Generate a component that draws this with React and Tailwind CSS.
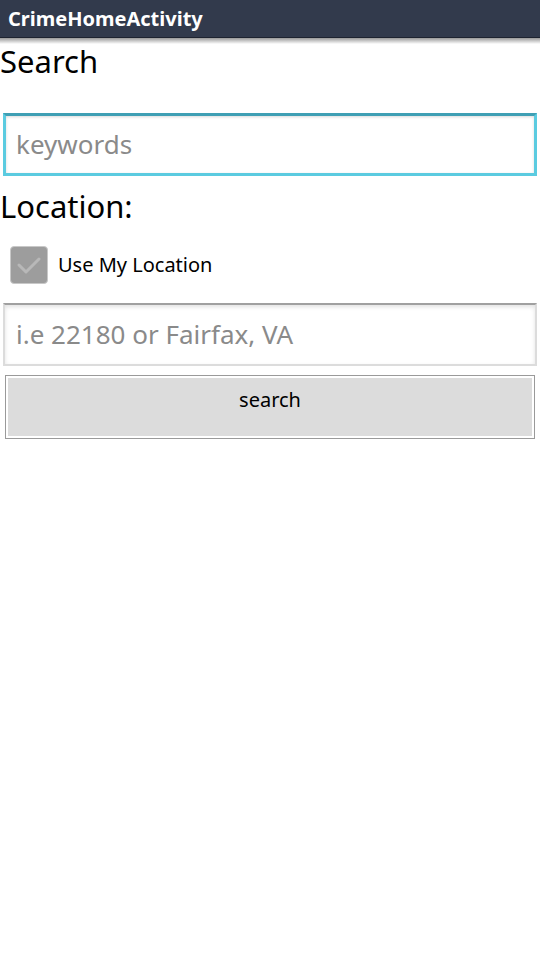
export default function App() {
  return (
    <div className="w-[540px] h-[960px] bg-white font-['Noto_Sans',sans-serif] overflow-hidden">
      {/* Title bar */}
      <div className="h-[38px] bg-[#323a4c] border-b border-[#1e2330] flex items-center px-[8px]">
        <span className="text-white font-bold text-[20px] leading-none">CrimeHomeActivity</span>
      </div>
      <div className="h-[6px] bg-gradient-to-b from-[#9a9a9a] to-white -mb-[6px] relative" />

      <div className="pt-[3px]">
        <h1 className="text-[31px] leading-[40px] text-black">Search</h1>

        <div className="px-[3px] mt-[32px]">
          <div className="h-[63px] border-[3px] border-[#5bcbe0] border-t-[#3f9fb4] shadow-[inset_0_1px_3px_rgba(0,0,0,0.15)] flex items-center px-[10px]">
            <span className="text-[26px] text-[#8a8a8a]">keywords</span>
          </div>
        </div>

        <h2 className="text-[31px] leading-[40px] text-black mt-[10px]">Location:</h2>

        <div className="flex items-center mt-[20px] pl-[10px]">
          <div className="w-[38px] h-[38px] rounded-[4px] border border-[#c8c8c8] bg-[#9d9d9d] flex items-center justify-center">
            <svg width="26" height="20" viewBox="0 0 26 20">
              <path d="M3 10 L10 17 L23 4" fill="none" stroke="#b8b8b8" strokeWidth="3" strokeLinecap="round" strokeLinejoin="round" />
            </svg>
          </div>
          <span className="ml-[10px] text-[20px] text-black">Use My Location</span>
        </div>

        <div className="px-[3px] mt-[19px]">
          <div className="h-[63px] border-[2px] border-[#dcdcdc] border-t-[#a0a0a0] shadow-[inset_0_2px_4px_rgba(0,0,0,0.12)] flex items-center px-[11px]">
            <span className="text-[26px] text-[#8a8a8a]">i.e 22180 or Fairfax, VA</span>
          </div>
        </div>

        <div className="px-[5px] mt-[9px]">
          <div className="h-[64px] border border-[#9a9a9a] p-[2px] bg-white">
            <div className="h-full bg-[#dcdcdc] flex justify-center pt-[8px]">
              <span className="text-[20px] leading-[28px] text-black">search</span>
            </div>
          </div>
        </div>
      </div>
    </div>
  );
}
